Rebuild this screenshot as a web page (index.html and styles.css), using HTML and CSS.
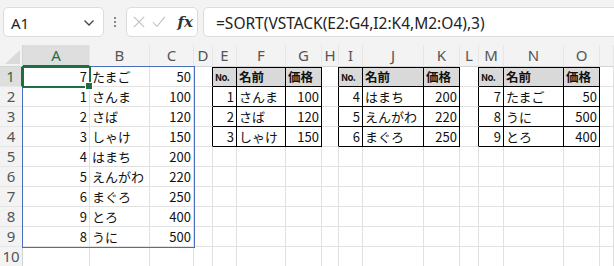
FILE: index.html
```html
<!DOCTYPE html>
<html lang="ja">
  <head>
    <meta charset="UTF-8">
    <meta name="viewport" content="width=device-width, initial-scale=1.0">
    <title>SORT VSTACK</title>
    <link rel="stylesheet" href="styles.css">
  </head>
  <body>

    <div class="bar">
      <div class="namebox">
        <span>A1</span>
        <svg width="12" height="8" viewBox="0 0 12 8"><path d="M1.5 1.5 L6 6 L10.5 1.5" fill="none" stroke="#444" stroke-width="1.3"/></svg>
      </div>
      <div class="dots"><i></i><i></i><i></i></div>
      <div class="fxbox">
        <svg width="14" height="14" viewBox="0 0 14 14"><path d="M1 1 L13 13 M13 1 L1 13" stroke="#bdbdbd" stroke-width="1.2"/></svg>
        <svg width="18" height="14" viewBox="0 0 18 14"><path d="M2 7 L7 12 L16 1" fill="none" stroke="#bdbdbd" stroke-width="1.2"/></svg>
        <span class="fx">fx</span>
      </div>
      <div class="formula">=SORT(VSTACK(E2:G4,I2:K4,M2:O4),3)</div>
    </div>

    <div class="wrap">
      <div class="sheet" id="sheet"></div>
      <div class="spill"></div>
      <div class="sel"><b></b></div>
    </div>

    <script>
      const cols = ['', 'A', 'B', 'C', 'D', 'E', 'F', 'G', 'H', 'I', 'J', 'K', 'L', 'M', 'N', 'O', ''];
      const sheet = document.getElementById('sheet');

      // column A-C : the spilled result
      const left = [
        [7, 'たまご', 50], [1, 'さんま', 100], [2, 'さば', 120],
        [3, 'しゃけ', 150], [4, 'はまち', 200], [5, 'えんがわ', 220],
        [6, 'まぐろ', 250], [9, 'とろ', 400], [8, 'うに', 500]
      ];

      // three small tables, start column index
      const tables = [
        [5, [[1, 'さんま', 100], [2, 'さば', 120], [3, 'しゃけ', 150]]],
        [9, [[4, 'はまち', 200], [5, 'えんがわ', 220], [6, 'まぐろ', 250]]],
        [13, [[7, 'たまご', 50], [8, 'うに', 500], [9, 'とろ', 400]]]
      ];

      function cell(cls, text) {
        const d = document.createElement('div');
        d.className = 'c ' + cls;
        if (text !== undefined) d.append(text);
        sheet.appendChild(d);
        return d;
      }

      // header row
      cols.forEach(function(name, i) {
        if (i == 0) cell('corner');
        else if (i == 1) cell('ch on', name);
        else cell('ch', name);
      });

      for (let r = 1; r <= 10; r++) {
        for (let c = 0; c < cols.length; c++) {
          if (c == 0) { cell(r == 1 ? 'rh on' : 'rh', r); continue; }
          let d = null;

          if (r <= 9 && c <= 3) {
            const v = left[r - 1][c - 1];
            d = cell(c == 2 ? 'txt' : 'num', v);
          }

          tables.forEach(function(t) {
            const k = c - t[0];
            if (k < 0 || k > 2 || r > 4) return;
            if (r == 1) {
              const head = ['No.', '名前', '価格'][k];
              d = cell('tb th top' + (k == 0 ? ' no' : ''), head);
            } else {
              const v = t[1][r - 2][k];
              d = cell('tb ' + (k == 1 ? 'txt' : 'num'), v);
            }
          });

          if (!d) {
            // cell just left of a table gets the table's left line
            const edge = r <= 4 && tables.some(function(t) { return t[0] == c + 1; });
            cell(edge ? 'edge' : '');
          }
        }
      }
    </script>

  </body>
</html>
```

FILE: styles.css
```css
body {
  margin: 0;
  background: #ffffff;
  font-family: "Noto Sans CJK JP", "Noto Sans", sans-serif;
  overflow: hidden;
}

.bar {
  height: 45px;
  background: #f3f3f3;
  display: flex;
  align-items: flex-start;
  padding: 7px 0 0 3px;
  box-sizing: border-box;
}

.namebox {
  width: 101px;
  height: 30px;
  box-sizing: border-box;
  background: white;
  border: 1px solid #dcdcdc;
  border-radius: 5px;
  display: flex;
  align-items: center;
  justify-content: space-between;
  padding: 2px 8px 0 7px;
  font-family: "Noto Sans", sans-serif;
  font-size: 15px;
  color: #222;
}

.dots {
  width: 22px;
  height: 30px;
  display: flex;
  flex-direction: column;
  align-items: center;
  justify-content: center;
  gap: 2px;
}
.dots i {
  width: 2px;
  height: 2px;
  background: #888;
}

.fxbox {
  width: 72px;
  height: 30px;
  box-sizing: border-box;
  background: white;
  border: 1px solid #dcdcdc;
  border-radius: 5px;
  display: flex;
  align-items: center;
  padding: 0 4px 0 6px;
  gap: 6px;
}
.fx {
  font-family: "DejaVu Serif", "Liberation Serif", serif;
  font-style: italic;
  font-weight: bold;
  font-size: 15px;
  color: #333;
  margin-left: 5px;
}

.formula {
  flex: 1;
  margin-left: 5px;
  margin-right: -10px;
  height: 30px;
  box-sizing: border-box;
  background: white;
  border: 1px solid #dcdcdc;
  border-radius: 5px;
  padding: 4px 0 0 12px;
  font-family: "Noto Sans", sans-serif;
  font-size: 15.5px;
  color: #222;
  white-space: nowrap;
}

.wrap {
  position: relative;
}

.sheet {
  display: grid;
  grid-template-columns: 23px 67px 60px 44px 19px 24px 49px 36px 17px 24px 61px 36px 19px 25px 60px 36px 1fr;
  grid-template-rows: 22px;
  grid-auto-rows: 20px;
  font-size: 13px;
  color: #111;
}

.c {
  box-sizing: border-box;
  border-right: 1px solid #e1e1e1;
  border-bottom: 1px solid #e1e1e1;
  white-space: nowrap;
  overflow: hidden;
  line-height: 20px;
  padding: 0 2px;
}

.corner {
  background: #f3f3f3;
  border-bottom: 1px solid #d4d4d4;
  border-right: 1px solid #d4d4d4;
  position: relative;
}
.corner::after {
  content: "";
  position: absolute;
  right: 2px;
  bottom: 2px;
  border-left: 15px solid transparent;
  border-bottom: 14px solid #dadada;
}

.ch {
  background: #f3f3f3;
  border-bottom: 1px solid #d4d4d4;
  border-right: 1px solid #e6e6e6;
  text-align: center;
  color: #555;
  font-family: "Noto Sans", sans-serif;
  font-size: 15px;
  line-height: 21px;
}
.ch.on {
  background: #dedede;
  color: #1f6e43;
  border-bottom: 2px solid #1f6e43;
}

.rh {
  background: #f3f3f3;
  border-right: 1px solid #d4d4d4;
  border-bottom: 1px solid #e6e6e6;
  text-align: center;
  color: #555;
  font-family: "Noto Sans", sans-serif;
  font-size: 15px;
  line-height: 19px;
  padding: 0;
}
.rh.on {
  background: #dedede;
  color: #1f6e43;
  border-right: 2px solid #1f6e43;
}

.num {
  text-align: right;
}
.txt {
  text-align: left;
}

.tb {
  border-right: 1px solid #000;
  border-bottom: 1px solid #000;
}
.th {
  background: #d9d9d9;
  font-weight: bold;
  font-size: 12.5px;
  line-height: 18px;
}
.top {
  border-top: 1px solid #000;
}
.no {
  font-size: 9.5px;
  letter-spacing: -0.6px;
}
.edge {
  border-right: 1px solid #000;
}

.spill {
  position: absolute;
  left: 22px;
  top: 21px;
  width: 173px;
  height: 182px;
  box-sizing: border-box;
  border: 1px solid #4a6ebf;
  pointer-events: none;
}

.sel {
  position: absolute;
  left: 22px;
  top: 21px;
  width: 69px;
  height: 22px;
  box-sizing: border-box;
  border: 2px solid #1f6e43;
}
.sel b {
  position: absolute;
  right: -4px;
  bottom: -4px;
  width: 6px;
  height: 6px;
  background: #1f6e43;
  border: 1px solid white;
}
```
